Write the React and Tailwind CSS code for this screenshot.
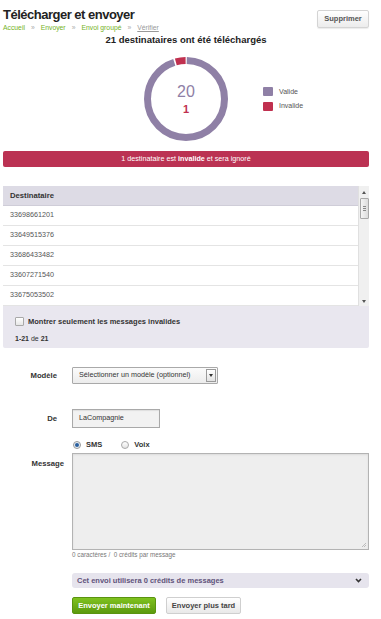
import React from "react";

const C = 2 * Math.PI * 38.5;

function Donut() {
  const gap = 1.6;
  const purple = (C * 20) / 21 - gap;
  const red = C / 21 - gap;
  return (
    <svg width="84" height="84" viewBox="0 0 84 84">
      <g transform="rotate(-90 42 42)">
        <circle cx="42" cy="42" r="38.5" fill="none" stroke="#8f80a6" strokeWidth="7"
          strokeDasharray={`${purple} ${C}`} strokeDashoffset={-gap / 2} />
        <circle cx="42" cy="42" r="38.5" fill="none" stroke="#c0304f" strokeWidth="7"
          strokeDasharray={`${red} ${C}`} strokeDashoffset={-((C * 20) / 21 + gap / 2)} />
      </g>
    </svg>
  );
}

const numbers = ["33698661201", "33649515376", "33686433482", "33607271540", "33675053502"];

export default function App() {
  return (
    <div className="w-[381px] h-[619px] overflow-hidden bg-white font-['Liberation_Sans',Arial,sans-serif] text-[#333]">
      <div className="pl-[3px] pr-[12px]">
        {/* header */}
        <div className="flex justify-between pt-[6px]">
          <div>
            <h1 className="text-[13px] leading-[18px] font-bold tracking-[-0.5px] text-[#222]">Télécharger et envoyer</h1>
            <div className="text-[6.8px] leading-[8px] text-[#74b21e] flex gap-[6px]">
              <span>Accueil</span><span className="text-[#aaa]">»</span>
              <span>Envoyer</span><span className="text-[#aaa]">»</span>
              <span>Envoi groupé</span><span className="text-[#aaa]">»</span>
              <span className="text-[#999] underline">Vérifier</span>
            </div>
          </div>
          <button className="mt-[4px] h-[18px] w-[52px] rounded-[2px] border border-[#d4d4d4] bg-gradient-to-b from-[#ffffff] to-[#ececec] text-[7.5px] font-bold text-[#555] shadow-[0_1px_1px_rgba(0,0,0,0.08)]">
            Supprimer
          </button>
        </div>

        <h2 className="mt-[3px] text-center text-[9.5px] leading-[10px] font-bold text-[#222]">21 destinataires ont été téléchargés</h2>

        {/* donut */}
        <div className="mt-[12px] grid grid-cols-[1fr_auto_1fr] items-center">
          <div />
          <div className="relative w-[84px] h-[84px]">
            <Donut />
            <div className="absolute inset-0 flex flex-col items-center justify-center pt-[1px]">
              <div className="text-[16px] leading-[16px] text-[#8f80a6]">20</div>
              <div className="mt-[4px] text-[11px] leading-[11px] font-bold text-[#c0304f]">1</div>
            </div>
          </div>
          <div className="pl-[35px] flex flex-col gap-[4px] text-[7px] text-[#555]">
            <div className="flex items-center gap-[6px]"><span className="w-[10px] h-[9px] rounded-[1px] bg-[#8f80a6]" />Valide</div>
            <div className="flex items-center gap-[6px]"><span className="w-[10px] h-[9px] rounded-[1px] bg-[#c0304f]" />Invalide</div>
          </div>
        </div>

        {/* banner */}
        <div className="mt-[10px] h-[16px] rounded-[2px] bg-[#bb3253] flex items-center justify-center text-[7.2px] text-white">
          1 destinataire est&nbsp;<b>invalide</b>&nbsp;et sera ignoré
        </div>

        {/* table */}
        <div className="mt-[19px]">
          <div className="flex h-[120px] overflow-hidden">
            <div className="flex-1">
              <div className="h-[20px] bg-[#dddbe5] flex items-center pl-[7px] text-[7.7px] font-bold text-[#333] border-b border-[#cfcdd8]">Destinataire</div>
              {numbers.map((n) => (
                <div key={n} className="h-[20px] flex items-center pl-[7px] border-b border-[#e4e4e4] text-[7.2px] text-[#555]">{n}</div>
              ))}
            </div>
            <div className="w-[11px] bg-[#f0f0f0] border-l border-[#e0e0e0] flex flex-col items-center">
              <div className="h-[12px] flex items-center justify-center">
                <div className="w-0 h-0 border-l-[2.5px] border-r-[2.5px] border-b-[3px] border-l-transparent border-r-transparent border-b-[#555]" />
              </div>
              <div className="w-[9px] h-[21px] rounded-[1px] border border-[#a8a8a8] bg-gradient-to-r from-[#f4f4f4] to-[#dcdcdc] flex flex-col items-center justify-center gap-[1px]">
                <div className="w-[3px] h-px bg-[#888]" />
                <div className="w-[3px] h-px bg-[#888]" />
                <div className="w-[3px] h-px bg-[#888]" />
              </div>
              <div className="flex-1" />
              <div className="h-[10px] flex items-center justify-center">
                <div className="w-0 h-0 border-l-[2.5px] border-r-[2.5px] border-t-[3px] border-l-transparent border-r-transparent border-t-[#555]" />
              </div>
            </div>
          </div>
          <div className="h-[42px] bg-[#e9e7ef] rounded-b-[2px] pl-[12px] pt-[10px]">
            <div className="flex items-center gap-[4px] text-[7.5px] font-bold text-[#333]">
              <span className="w-[9px] h-[9px] border border-[#a9a9a9] bg-gradient-to-b from-[#fff] to-[#e6e6e6] rounded-[1px]" />
              Montrer seulement les messages invalides
            </div>
            <div className="mt-[7px] text-[7px] text-[#333]"><b>1-21</b> de <b>21</b></div>
          </div>
        </div>

        {/* form */}
        <div className="mt-[19px] flex items-center">
          <div className="w-[69px] pr-[15px] text-right text-[7.7px] font-bold text-[#333]">Modèle</div>
          <div className="w-[146px] h-[17px] border border-[#a9a9a9] rounded-[1px] bg-gradient-to-b from-[#fbfbfb] to-[#ececec] flex items-center justify-between pl-[6px] pr-[1px] text-[7.2px] text-[#333]">
            <span>Sélectionner un modèle (optionnel)</span>
            <span className="w-[10px] h-[13px] border border-[#9a9a9a] bg-gradient-to-b from-[#fff] to-[#e2e2e2] flex items-center justify-center">
              <span className="w-0 h-0 border-l-[2.5px] border-r-[2.5px] border-t-[3px] border-l-transparent border-r-transparent border-t-[#333]" />
            </span>
          </div>
        </div>

        <div className="mt-[25px] flex items-center">
          <div className="w-[69px] pr-[15px] text-right text-[7.7px] font-bold text-[#333]">De</div>
          <div className="w-[88px] h-[19px] border border-[#a9a9a9] bg-[#f2f2f2] flex items-center pl-[6px] text-[7.2px] text-[#333] shadow-[inset_0_1px_1px_rgba(0,0,0,0.08)]">LaCompagnie</div>
        </div>

        <div className="mt-[12px] ml-[69px] flex items-center h-[10px] text-[7.5px] font-bold text-[#333]">
          <span className="ml-[1px] w-[8px] h-[8px] rounded-full border border-[#9a9a9a] bg-[#e8eef5] flex items-center justify-center">
            <span className="w-[4px] h-[4px] rounded-full bg-[#2a5f9e]" />
          </span>
          <span className="ml-[5px]">SMS</span>
          <span className="ml-[19px] w-[8px] h-[8px] rounded-full border border-[#a9a9a9] bg-gradient-to-b from-[#fff] to-[#e4e4e4]" />
          <span className="ml-[5px]">Voix</span>
        </div>

        <div className="mt-[3px] flex items-start">
          <div className="w-[69px] pr-[8px] pt-[5px] text-right text-[7.7px] font-bold text-[#333]">Message</div>
          <div className="flex-1">
            <div className="relative h-[97px] border border-[#b3b3b3] bg-[#eeeeee] shadow-[inset_0_1px_2px_rgba(0,0,0,0.08)]">
              <svg className="absolute right-[1px] bottom-[1px]" width="6" height="6" viewBox="0 0 6 6">
                <path d="M5 1L1 5M5 3L3 5" stroke="#b0b0b0" strokeWidth="0.8" />
              </svg>
            </div>
            <div className="mt-[1px] text-[6.3px] leading-[8px] text-[#777]">0 caractères /&nbsp; 0 crédits par message</div>
            <div className="mt-[14px] h-[15px] rounded-[3px] bg-[#e6e4ed] flex items-center justify-between pl-[5px] pr-[7px] text-[7.5px] font-bold text-[#5f537a]">
              <span>Cet envoi utilisera 0 crédits de messages</span>
              <svg width="7" height="5" viewBox="0 0 7 5">
                <path d="M1 1L3.5 3.5L6 1" stroke="#333" strokeWidth="1.6" fill="none" />
              </svg>
            </div>
            <div className="mt-[9px] flex gap-[10px]">
              <button className="w-[84px] h-[17px] rounded-[2px] bg-gradient-to-b from-[#7fc21f] to-[#5c9a0d] border border-[#5a940f] text-[7.5px] font-bold text-white">Envoyer maintenant</button>
              <button className="w-[75px] h-[17px] rounded-[2px] bg-gradient-to-b from-[#fff] to-[#e9e9e9] border border-[#cfcfcf] text-[7.5px] font-bold text-[#444]">Envoyer plus tard</button>
            </div>
          </div>
        </div>
      </div>
    </div>
  );
}
